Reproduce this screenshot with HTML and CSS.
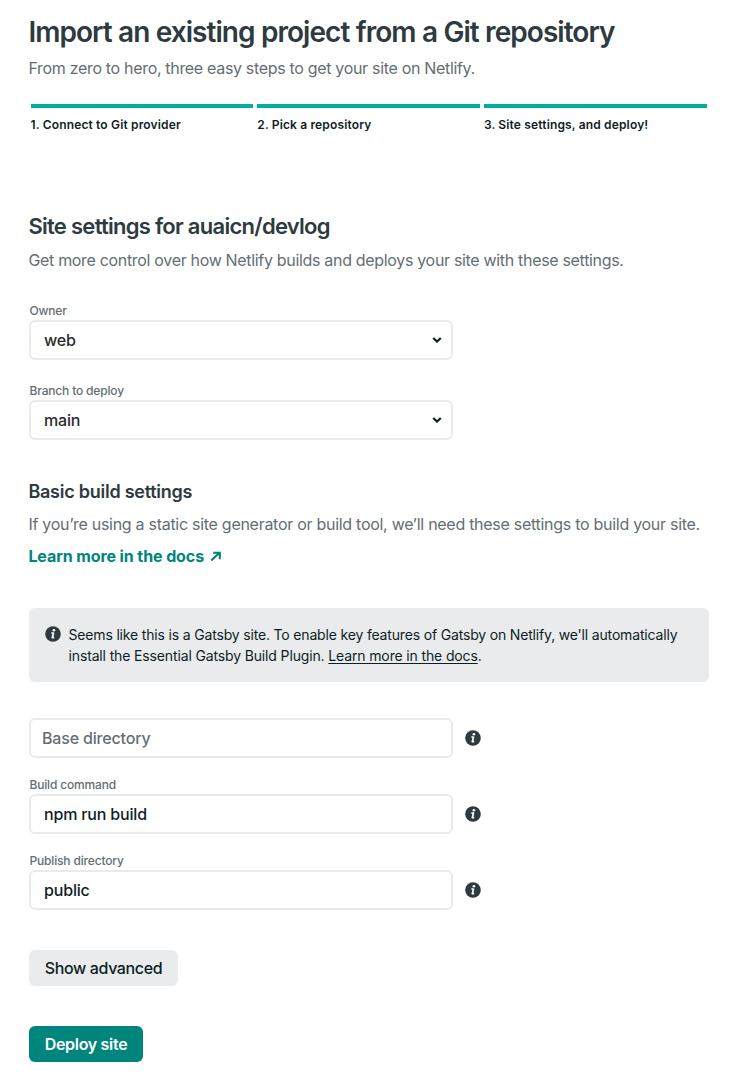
FILE: index.html
```html
<!DOCTYPE html>
<html lang="en">
<head>
<meta charset="utf-8">
<title>Import an existing project</title>
<link rel="stylesheet" href="styles.css">
</head>
<body>
<svg class="sprite" aria-hidden="true">
  <symbol id="info" viewBox="0 0 16 16">
    <circle cx="8" cy="8" r="7.8" fill="#2d3b41"/>
    <circle cx="8.9" cy="4.2" r="1.3" fill="#fff"/>
    <path d="M6.3 7h2.2L7.3 11.7h1.9" fill="none" stroke="#fff" stroke-width="1.7" stroke-linejoin="round"/>
  </symbol>
  <symbol id="chevron" viewBox="0 0 10 8">
    <path d="M1.2 2 5 5.5 8.8 2" fill="none" stroke="#0e1e25" stroke-width="2.3"/>
  </symbol>
</svg>
<main class="page">
  <header>
    <h1 class="title">Import an existing project from a Git repository</h1>
    <p class="text lead">From zero to hero, three easy steps to get your site on Netlify.</p>
    <ol class="steps">
      <li class="step">1. Connect to Git provider</li>
      <li class="step">2. Pick a repository</li>
      <li class="step">3. Site settings, and deploy!</li>
    </ol>
  </header>
  <section class="site">
    <h2 class="heading">Site settings for auaicn/devlog</h2>
    <p class="text intro">Get more control over how Netlify builds and deploys your site with these settings.</p>
    <div class="field owner">
      <label class="label" for="owner">Owner</label>
      <div class="control select">
        <select class="input dark" id="owner"><option>web</option></select>
        <svg class="chevron"><use href="#chevron"/></svg>
      </div>
    </div>
    <div class="field branch">
      <label class="label" for="branch">Branch to deploy</label>
      <div class="control select">
        <select class="input dark" id="branch"><option>main</option></select>
        <svg class="chevron"><use href="#chevron"/></svg>
      </div>
    </div>
  </section>
  <section class="build">
    <h3 class="subheading">Basic build settings</h3>
    <p class="text build-text">If you’re using a static site generator or build tool, we’ll need these settings to build your site.</p>
    <a class="docs"><span>Learn more in the docs</span><svg class="arrow" viewBox="0 0 12 12"><path d="M1.2 10.4 9 3.2M3.2 2.7h6.6v6.6" fill="none" stroke="currentColor" stroke-width="2.1"/></svg></a>
    <div class="notice">
      <svg class="info"><use href="#info"/></svg>
      <p class="notice-text">Seems like this is a Gatsby site. To enable key features of Gatsby on Netlify, we'll automatically<br><span class="notice-end">install the Essential Gatsby Build Plugin. <a class="underline">Learn more in the docs</a>.</span></p>
    </div>
    <div class="control base"><input class="input base-input" placeholder="Base directory"><svg class="info"><use href="#info"/></svg></div>
    <div class="field command">
      <label class="label" for="command">Build command</label>
      <div class="control"><input class="input" id="command" value="npm run build"><svg class="info"><use href="#info"/></svg></div>
    </div>
    <div class="field publish">
      <label class="label" for="publish">Publish directory</label>
      <div class="control"><input class="input" id="publish" value="public"><svg class="info"><use href="#info"/></svg></div>
    </div>
  </section>
  <div class="actions">
    <button class="button secondary">Show advanced</button>
    <button class="button primary">Deploy site</button>
  </div>
</main>
</body>
</html>
```
FILE: styles.css
```css
* { box-sizing: border-box; }
body { margin: 0; background: #fff; color: #0e1e25; font-family: Inter, "Liberation Sans", sans-serif; }
h1, h2, h3, p, ol { margin: 0; padding: 0; }
.sprite { display: none; }
.page { width: 709px; padding: 14px 0 0 29px; white-space: nowrap; }
.title, .text, .heading, .subheading, .docs { margin-left: -0.6px; }
.title { color: #2d3b41; font-size: 28px; line-height: 36px; font-weight: 600; letter-spacing: -0.95px; word-spacing: 0.25px; }
.text { color: #646e73; font-size: 16px; line-height: 24px; letter-spacing: -0.32px; }
.lead { margin-top: 6px; }
.steps { display: grid; grid-template-columns: repeat(3, 1fr); gap: 4px; width: 676px; margin: 24px 0 0 1.6px; list-style: none; }
.step { border-top: 4px solid #00ad9f; padding-top: 8px; font-size: 12px; line-height: 18px; font-weight: 600; letter-spacing: 0.15px; }
.site { margin-top: 78px; }
.heading { color: #2d3b41; font-size: 22px; line-height: 28px; font-weight: 600; letter-spacing: -0.72px; }
.intro { margin-top: 8px; }
.field { display: flex; flex-direction: column; }
.owner { margin-top: 30px; }
.branch { margin-top: 22px; }
.command, .publish { margin-top: 18px; }
.label { padding: 0 0 1px 0.5px; color: #646e73; font-size: 12px; line-height: 17px; font-weight: 500; letter-spacing: -0.17px; }
.control { display: flex; align-items: center; gap: 12px; height: 40px; }
.select { position: relative; width: 424px; }
.input { appearance: none; width: 424px; height: 40px; margin: 0; border: 2px solid #e9ebeb; border-radius: 6px; padding: 0 13px; background: #fff; color: #0e1e25; font: 500 16px/24px Inter, sans-serif; letter-spacing: -0.17px; }
.dark { color: #2b2b2b; }
.base-input { padding-left: 11px; }
.input::placeholder { color: #646e73; opacity: 1; }
.chevron { position: absolute; right: 11px; top: 16px; width: 10px; height: 8px; }
.info { flex: none; width: 16px; height: 16px; }
.build { margin-top: 40px; }
.subheading { color: #2d3b41; font-size: 18px; line-height: 24px; font-weight: 600; letter-spacing: -0.25px; }
.build-text { margin-top: 8px; letter-spacing: -0.28px; }
.docs { display: flex; align-items: center; gap: 6px; margin-top: 8px; color: #00857c; font-size: 16px; line-height: 24px; font-weight: 700; letter-spacing: -0.1px; }
.arrow { width: 12px; height: 12px; }
.notice { display: flex; gap: 7.5px; height: 74px; margin-top: 40px; padding: 16px; border-radius: 6px; background: #e9ebec; }
.notice .info { margin-top: 2px; }
.notice-text { font-size: 14px; line-height: 21px; letter-spacing: -0.17px; }
.notice-end { letter-spacing: -0.14px; }
.underline { text-decoration: underline; text-underline-offset: 2px; }
.base { margin-top: 36px; }
.actions { display: flex; flex-direction: column; align-items: flex-start; gap: 40px; margin-top: 40px; }
.button { height: 36px; border: 0; border-radius: 6px; padding: 0; font: 500 16px/24px Inter, sans-serif; letter-spacing: -0.38px; }
.secondary { width: 149px; background: #e9ebec; color: #0e1e25; }
.primary { width: 114px; background: #00857c; color: #fff; font-weight: 600; letter-spacing: -0.3px; }
```
